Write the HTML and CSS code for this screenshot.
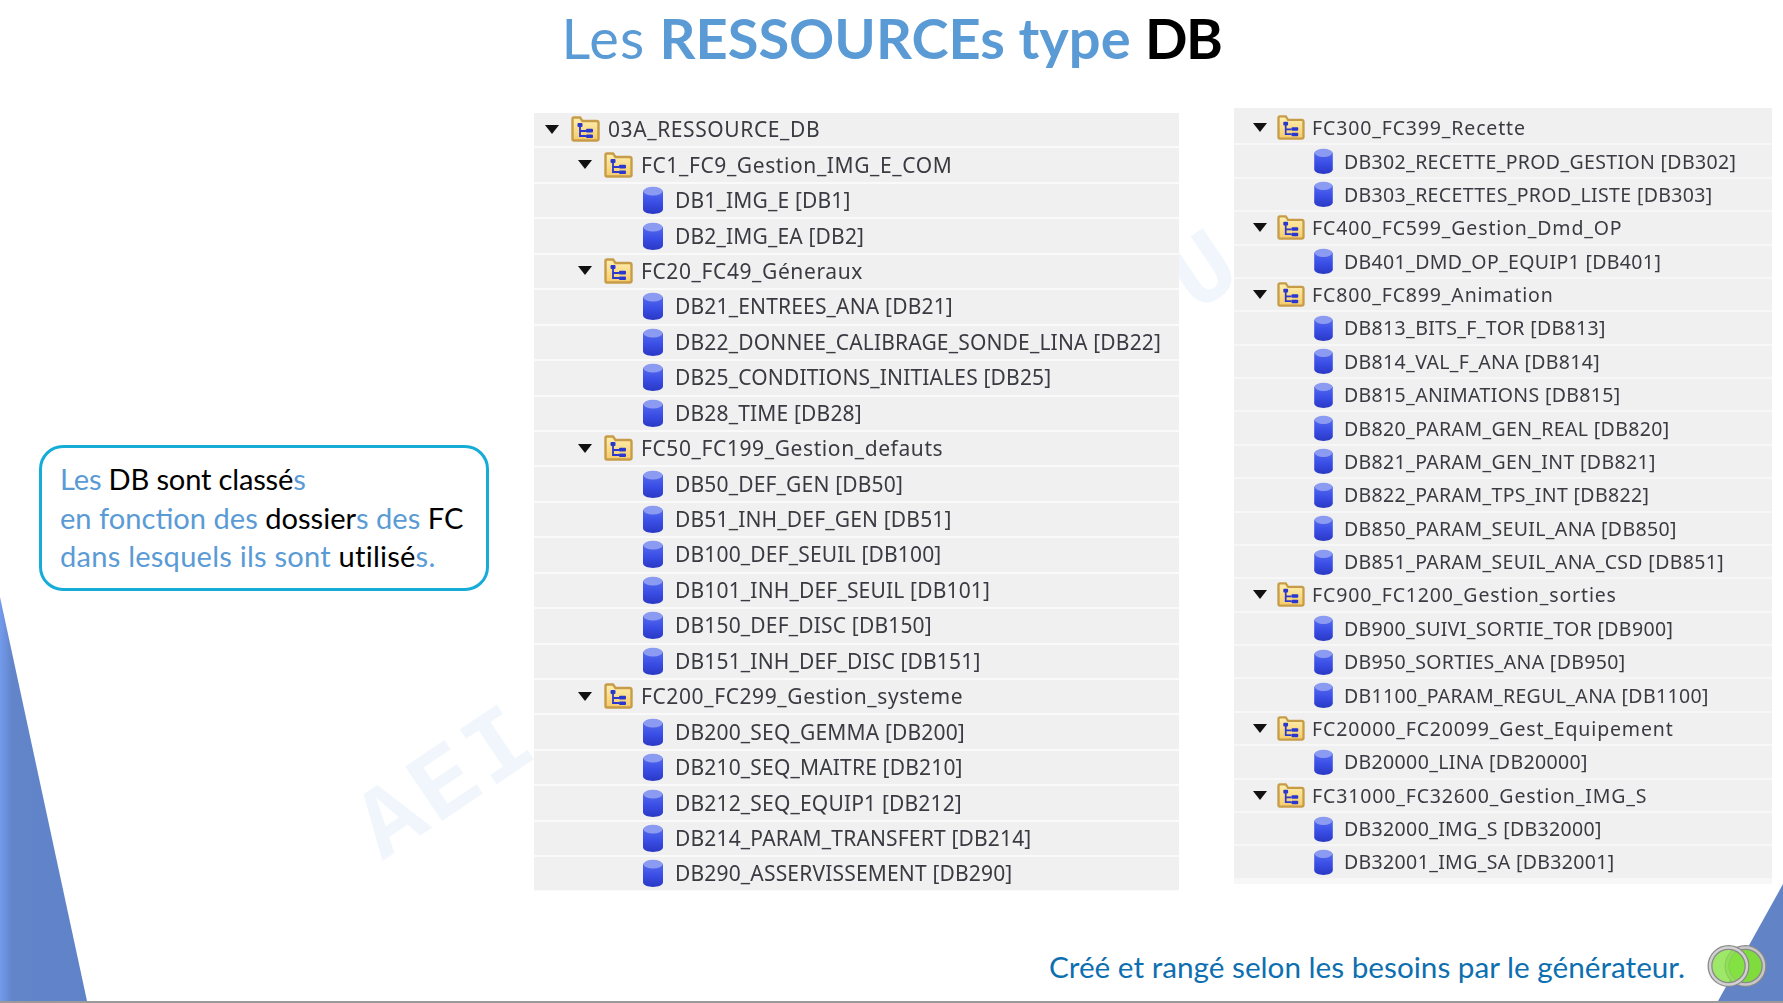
FILE: index.html
```html
<!DOCTYPE html>
<html lang="fr">
<head>
<meta charset="utf-8">
<title>Les RESSOURCEs type DB</title>
<link rel="stylesheet" href="styles.css">
</head>
<body>
<svg class="defs" width="0" height="0" aria-hidden="true">
  <defs>
    <linearGradient id="fold" x1="0" y1="0" x2="0" y2="1"><stop offset="0" stop-color="#fff0b0"/><stop offset="1" stop-color="#f5cb6c"/></linearGradient>
    <linearGradient id="cyl" x1="0" y1="0" x2="0" y2="1"><stop offset="0" stop-color="#5a70ee"/><stop offset=".55" stop-color="#3a4ee6"/><stop offset="1" stop-color="#2a38c4"/></linearGradient>
    <symbol id="folder" viewBox="0 0 29 26">
      <path d="M1.500 23V3q0-1.500 1.500-1.500h6l2.500 3.500h14q2 0 2 2v16q0 1.500-2 1.500H3q-1.500 0-1.500-1.500z" fill="url(#fold)" stroke="#c79c48" stroke-width="2.400"/>
      <path d="M9 10v10h6M9 15h6" fill="none" stroke="#2a38d0" stroke-width="1.800"/>
      <rect x="6.500" y="7" width="5" height="4" rx="1" fill="#2a38d0"/>
      <rect x="15" y="12.800" width="7" height="3.600" rx="1" fill="#2a38d0"/>
      <rect x="15" y="18.400" width="7" height="3.600" rx="1" fill="#2a38d0"/>
    </symbol>
    <symbol id="db" viewBox="0 0 20 28">
      <path d="M0 6C0 1 20 1 20 6V23C20 29.500 0 29.500 0 23z" fill="url(#cyl)"/>
      <ellipse cx="10" cy="5.200" rx="9.500" ry="4.400" fill="#8c9bf2"/>
    </symbol>
    <symbol id="arrow" viewBox="0 0 14 9"><path d="M0 0h14L7 9z" fill="#111"/></symbol>
  </defs>
</svg>
<div class="slide">
  <div class="wedge-left"></div>
  <div class="wedge-right"></div>
  <div class="watermark">AEI<span class="watermark-gap"></span>U</div>

  <h1 class="title"><span class="title-les">Les</span> <b>RESSOURCEs type</b> <b class="ink title-db">DB</b></h1>

  <main class="content">
    <aside class="callout">
      <p><span class="line-tight">Les <span class="ink">DB sont classé</span>s</span><br>en fonction des <span class="ink">dossier</span>s des <span class="ink">FC</span><br><span class="line-wide">dans lesquels ils sont <span class="ink">utilisé</span>s.</span></p>
    </aside>

    <section class="tree tree-left">
      <div class="row lvl0"><svg class="arrow"><use href="#arrow"/></svg><svg class="folder"><use href="#folder"/></svg><span>03A_RESSOURCE_DB</span></div>
      <div class="row lvl1"><svg class="arrow"><use href="#arrow"/></svg><svg class="folder"><use href="#folder"/></svg><span>FC1_FC9_Gestion_IMG_E_COM</span></div>
      <div class="row leaf"><svg class="db"><use href="#db"/></svg><span>DB1_IMG_E [DB1]</span></div>
      <div class="row leaf"><svg class="db"><use href="#db"/></svg><span>DB2_IMG_EA [DB2]</span></div>
      <div class="row lvl1"><svg class="arrow"><use href="#arrow"/></svg><svg class="folder"><use href="#folder"/></svg><span>FC20_FC49_Géneraux</span></div>
      <div class="row leaf"><svg class="db"><use href="#db"/></svg><span>DB21_ENTREES_ANA [DB21]</span></div>
      <div class="row leaf"><svg class="db"><use href="#db"/></svg><span>DB22_DONNEE_CALIBRAGE_SONDE_LINA [DB22]</span></div>
      <div class="row leaf"><svg class="db"><use href="#db"/></svg><span>DB25_CONDITIONS_INITIALES [DB25]</span></div>
      <div class="row leaf"><svg class="db"><use href="#db"/></svg><span>DB28_TIME [DB28]</span></div>
      <div class="row lvl1"><svg class="arrow"><use href="#arrow"/></svg><svg class="folder"><use href="#folder"/></svg><span>FC50_FC199_Gestion_defauts</span></div>
      <div class="row leaf"><svg class="db"><use href="#db"/></svg><span>DB50_DEF_GEN [DB50]</span></div>
      <div class="row leaf"><svg class="db"><use href="#db"/></svg><span>DB51_INH_DEF_GEN [DB51]</span></div>
      <div class="row leaf"><svg class="db"><use href="#db"/></svg><span>DB100_DEF_SEUIL [DB100]</span></div>
      <div class="row leaf"><svg class="db"><use href="#db"/></svg><span>DB101_INH_DEF_SEUIL [DB101]</span></div>
      <div class="row leaf"><svg class="db"><use href="#db"/></svg><span>DB150_DEF_DISC [DB150]</span></div>
      <div class="row leaf"><svg class="db"><use href="#db"/></svg><span>DB151_INH_DEF_DISC [DB151]</span></div>
      <div class="row lvl1"><svg class="arrow"><use href="#arrow"/></svg><svg class="folder"><use href="#folder"/></svg><span>FC200_FC299_Gestion_systeme</span></div>
      <div class="row leaf"><svg class="db"><use href="#db"/></svg><span>DB200_SEQ_GEMMA [DB200]</span></div>
      <div class="row leaf"><svg class="db"><use href="#db"/></svg><span>DB210_SEQ_MAITRE [DB210]</span></div>
      <div class="row leaf"><svg class="db"><use href="#db"/></svg><span>DB212_SEQ_EQUIP1 [DB212]</span></div>
      <div class="row leaf"><svg class="db"><use href="#db"/></svg><span>DB214_PARAM_TRANSFERT [DB214]</span></div>
      <div class="row leaf"><svg class="db"><use href="#db"/></svg><span>DB290_ASSERVISSEMENT [DB290]</span></div>
    </section>

    <section class="tree tree-right">
      <div class="row lvl1"><svg class="arrow"><use href="#arrow"/></svg><svg class="folder"><use href="#folder"/></svg><span>FC300_FC399_Recette</span></div>
      <div class="row leaf"><svg class="db"><use href="#db"/></svg><span>DB302_RECETTE_PROD_GESTION [DB302]</span></div>
      <div class="row leaf"><svg class="db"><use href="#db"/></svg><span>DB303_RECETTES_PROD_LISTE [DB303]</span></div>
      <div class="row lvl1"><svg class="arrow"><use href="#arrow"/></svg><svg class="folder"><use href="#folder"/></svg><span>FC400_FC599_Gestion_Dmd_OP</span></div>
      <div class="row leaf"><svg class="db"><use href="#db"/></svg><span>DB401_DMD_OP_EQUIP1 [DB401]</span></div>
      <div class="row lvl1"><svg class="arrow"><use href="#arrow"/></svg><svg class="folder"><use href="#folder"/></svg><span>FC800_FC899_Animation</span></div>
      <div class="row leaf"><svg class="db"><use href="#db"/></svg><span>DB813_BITS_F_TOR [DB813]</span></div>
      <div class="row leaf"><svg class="db"><use href="#db"/></svg><span>DB814_VAL_F_ANA [DB814]</span></div>
      <div class="row leaf"><svg class="db"><use href="#db"/></svg><span>DB815_ANIMATIONS [DB815]</span></div>
      <div class="row leaf"><svg class="db"><use href="#db"/></svg><span>DB820_PARAM_GEN_REAL [DB820]</span></div>
      <div class="row leaf"><svg class="db"><use href="#db"/></svg><span>DB821_PARAM_GEN_INT [DB821]</span></div>
      <div class="row leaf"><svg class="db"><use href="#db"/></svg><span>DB822_PARAM_TPS_INT [DB822]</span></div>
      <div class="row leaf"><svg class="db"><use href="#db"/></svg><span>DB850_PARAM_SEUIL_ANA [DB850]</span></div>
      <div class="row leaf"><svg class="db"><use href="#db"/></svg><span>DB851_PARAM_SEUIL_ANA_CSD [DB851]</span></div>
      <div class="row lvl1"><svg class="arrow"><use href="#arrow"/></svg><svg class="folder"><use href="#folder"/></svg><span>FC900_FC1200_Gestion_sorties</span></div>
      <div class="row leaf"><svg class="db"><use href="#db"/></svg><span>DB900_SUIVI_SORTIE_TOR [DB900]</span></div>
      <div class="row leaf"><svg class="db"><use href="#db"/></svg><span>DB950_SORTIES_ANA [DB950]</span></div>
      <div class="row leaf"><svg class="db"><use href="#db"/></svg><span>DB1100_PARAM_REGUL_ANA [DB1100]</span></div>
      <div class="row lvl1"><svg class="arrow"><use href="#arrow"/></svg><svg class="folder"><use href="#folder"/></svg><span>FC20000_FC20099_Gest_Equipement</span></div>
      <div class="row leaf"><svg class="db"><use href="#db"/></svg><span>DB20000_LINA [DB20000]</span></div>
      <div class="row lvl1"><svg class="arrow"><use href="#arrow"/></svg><svg class="folder"><use href="#folder"/></svg><span>FC31000_FC32600_Gestion_IMG_S</span></div>
      <div class="row leaf"><svg class="db"><use href="#db"/></svg><span>DB32000_IMG_S [DB32000]</span></div>
      <div class="row leaf"><svg class="db"><use href="#db"/></svg><span>DB32001_IMG_SA [DB32001]</span></div>
    </section>
  </main>

  <footer class="footer">
    <span>Créé et rangé selon les besoins par le générateur.</span>
    <svg class="logo" viewBox="0 0 60 44" aria-hidden="true">
      <circle cx="38.500" cy="22" r="18.500" fill="#7fdc3c" stroke="#8a8a8a" stroke-width="5"/>
      <circle cx="38.500" cy="22" r="18.500" fill="none" stroke="#c8c8c8" stroke-width="2.400"/>
      <circle cx="21.500" cy="22" r="18.500" fill="#86e243" fill-opacity=".8" stroke="#8a8a8a" stroke-width="5"/>
      <circle cx="21.500" cy="22" r="18.500" fill="none" stroke="#d2d2d2" stroke-width="2.400"/>
    </svg>
  </footer>
</div>
</body>
</html>
```

FILE: styles.css
```css
html, body {
  margin: 0;
  padding: 0;
  background: #fff;
}

.defs {
  position: absolute;
}

.slide {
  position: relative;
  width: 1783px;
  height: 1003px;
  display: flex;
  flex-direction: column;
  overflow: hidden;
  background: #fff;
  border-bottom: 2px solid #9a9a9a;
  box-sizing: border-box;
  font-family: "Lato", "Noto Sans", sans-serif;
}

.wedge-left,
.wedge-right {
  position: absolute;
  bottom: 0;
  background: linear-gradient(90deg, #739bec 0, #6284c9 12px, #6082c8 100%);
}

.wedge-left {
  left: 0;
  width: 87px;
  height: 404px;
  clip-path: polygon(0 0, 100% 100%, 0 100%);
}

.wedge-right {
  right: 0;
  width: 65px;
  height: 117px;
  background: #6284c6;
  clip-path: polygon(100% 0, 100% 100%, 0 100%);
}

.watermark {
  position: absolute;
  left: 396px;
  top: 781px;
  display: flex;
  align-items: center;
  font-family: "Liberation Mono", monospace;
  font-weight: 700;
  font-size: 100px;
  letter-spacing: 5px;
  line-height: 1;
  color: #f0f6fb;
  transform: rotate(-34deg);
  transform-origin: 0 100%;
  white-space: nowrap;
}

.watermark-gap {
  width: 785px;
}

.title {
  position: relative;
  margin: 0;
  height: 108px;
  padding-top: 4px;
  box-sizing: border-box;
  text-align: center;
  font-size: 56px;
  line-height: 68px;
  font-weight: 400;
  color: #5b9bd5;
}

.ink {
  color: #000;
}

.title b {
  font-weight: 700;
}

.title-les {
  letter-spacing: 1px;
}

.title .title-db {
  letter-spacing: -1.500px;
}

.content {
  position: relative;
  display: flex;
  align-items: flex-start;
  padding-left: 39px;
  flex: 1;
}

.callout {
  box-sizing: border-box;
  width: 450px;
  height: 146px;
  margin-top: 337px;
  margin-right: 45px;
  padding: 12px 18px;
  border: 3px solid #16acd8;
  border-radius: 24px;
  font-size: 29.1px;
  line-height: 38.6px;
  color: #5b9bd5;
  background: #fff;
}

.callout p {
  margin: 0;
  white-space: nowrap;
}

.line-tight {
  letter-spacing: -.18px;
}

.line-wide {
  letter-spacing: .22px;
}

.tree {
  display: grid;
  gap: 2px;
  font-family: "Noto Sans", sans-serif;
  color: #3a3a42;
  background: #fafafa;
  filter: blur(.4px);
}

.tree-left {
  width: 645px;
  margin-top: 5px;
  grid-auto-rows: 33.45px;
  font-size: 21px;
  letter-spacing: .17px;
}

.tree-left .row {
  padding-bottom: 1px;
}

.tree-left .row:last-child {
  align-self: start;
  height: 32.45px;
  padding-bottom: 0;
}

.tree-right {
  width: 538px;
  margin-left: 55px;
  grid-template-rows: 35.4px;
  grid-auto-rows: 31.39px;
  padding-bottom: 6px;
  font-size: 19.5px;
  letter-spacing: .35px;
  background: #f7f7f7;
}

.tree-right .row:first-child {
  padding-top: 4px;
}

.row {
  box-sizing: border-box;
  display: flex;
  align-items: center;
  background: #f0f0f0;
  white-space: nowrap;
}

.arrow {
  flex: none;
  width: 14px;
  height: 9px;
  margin-right: 12px;
}

.folder {
  flex: none;
  width: 29px;
  height: 26px;
  margin-right: 8px;
}

.db {
  flex: none;
  width: 20px;
  height: 28px;
  margin-right: 12px;
}

.lvl0,
.lvl1 {
  letter-spacing: .6px;
}

.tree-left .lvl0 {
  padding-left: 11px;
}

.tree-left .lvl1 {
  padding-left: 44px;
}

.tree-left .leaf {
  padding-left: 109px;
}

.tree-right .lvl1 {
  padding-left: 19px;
  letter-spacing: .85px;
}

.tree-right .leaf {
  padding-left: 80px;
}

.tree-right .folder {
  width: 28px;
  height: 25px;
  margin-right: 7px;
}

.tree-right .arrow {
  margin-right: 10px;
}

.tree-right .db {
  width: 19px;
  height: 26px;
  margin-right: 11px;
}

.footer {
  position: relative;
  display: flex;
  justify-content: flex-end;
  align-items: center;
  gap: 22px;
  height: 70px;
  padding-right: 16px;
  font-size: 29.7px;
  color: #0d6fb0;
}

.logo {
  flex: none;
  width: 60px;
  height: 44px;
}
```
